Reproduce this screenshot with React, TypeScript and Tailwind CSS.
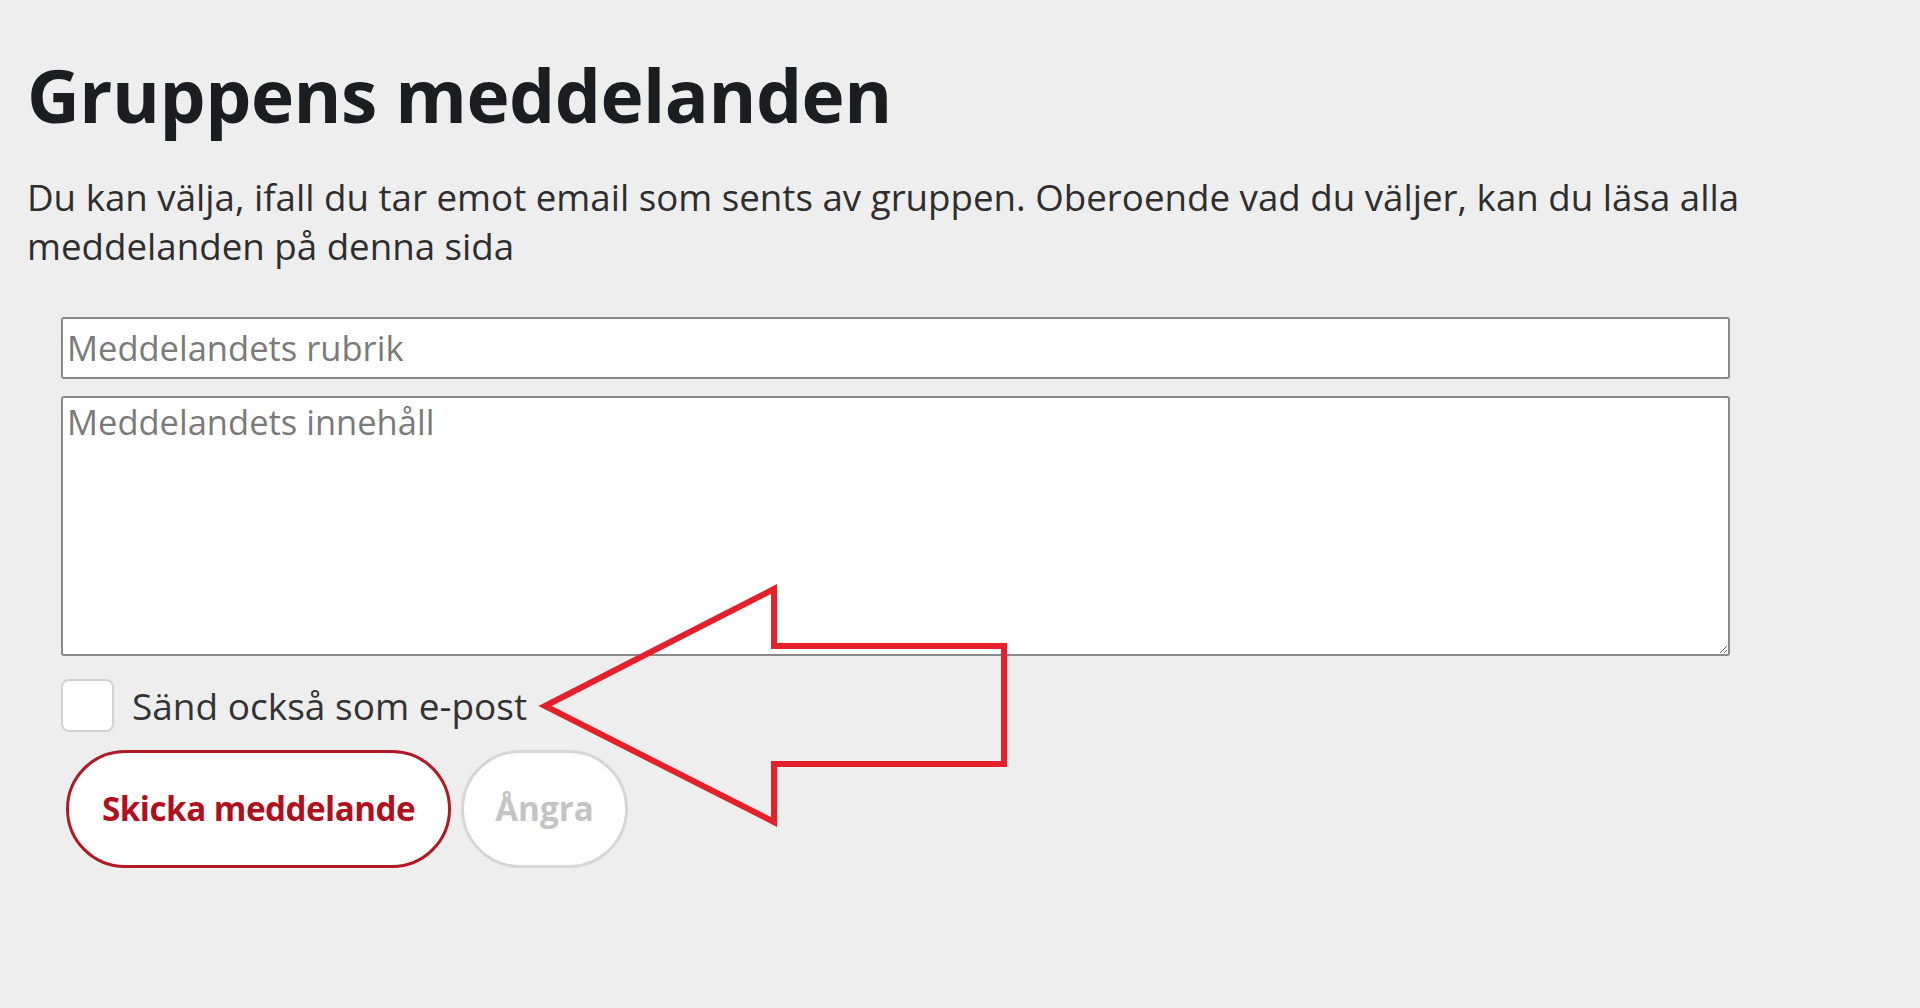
import { useState } from "react";

// big arrow drawn over the form, pointing at the e-post checkbox
const ArrowOverlay = () => (
  <svg
    className="pointer-events-none absolute left-0 top-0"
    width={1920}
    height={1008}
    viewBox="0 0 1920 1008"
  >
    <polygon
      points="545,706 774,589 774,646 1004,646 1004,764 774,764 774,822"
      fill="none"
      stroke="#e4202b"
      strokeWidth={6}
      strokeLinejoin="miter"
    />
  </svg>
);

export default function App() {
  const [title, setTitle] = useState("");
  const [body, setBody] = useState("");
  const [sendMail, setSendMail] = useState(false);

  return (
    <div className="relative min-h-[1008px] w-full bg-[#eeeeee] font-['Open_Sans',sans-serif]">
      <div className="px-[27px] pt-[51px]">
        <h1 className="text-[73px] font-bold leading-[1.2] tracking-[-0.5px] text-[#1c1d21]">
          Gruppens meddelanden
        </h1>
        <p className="mt-[34px] max-w-[1760px] text-[36.7px] leading-[49px] text-[#2e2e2e]">
          Du kan välja, ifall du tar emot email som sents av gruppen. Oberoende vad du väljer, kan du läsa alla
          <br />
          meddelanden på denna sida
        </p>

        {/* form */}
        <div className="mt-[46px] ml-[34px] w-[1669px]">
          <input
            value={title}
            onChange={(e) => setTitle(e.target.value)}
            placeholder="Meddelandets rubrik"
            className="block h-[62px] w-full rounded-[3px] border-2 border-[#8a8a8a] bg-white px-[4px] text-[34.5px] text-[#333] outline-none placeholder:text-[#7a7a7a]"
          />
          <textarea
            value={body}
            onChange={(e) => setBody(e.target.value)}
            placeholder="Meddelandets innehåll"
            className="mt-[17px] block h-[260px] w-full rounded-[3px] border-2 border-[#8a8a8a] bg-white px-[4px] pt-[2px] text-[34.5px] leading-[44px] text-[#333] outline-none placeholder:text-[#7a7a7a]"
          />

          <label className="mt-[22px] flex cursor-pointer items-center gap-[18px]">
            <span
              className={`h-[53px] w-[53px] rounded-[8px] border-2 border-[#d2d2d2] ${
                sendMail ? "bg-[#b3101e]" : "bg-white"
              }`}
            />
            <input
              type="checkbox"
              checked={sendMail}
              onChange={() => setSendMail(!sendMail)}
              className="hidden"
            />
            <span className="text-[37px] text-[#333]">Sänd också som e-post</span>
          </label>

          <div className="mt-[17px] ml-[5px] flex gap-[10px]">
            <button className="h-[118px] rounded-full border-[3px] border-[#b01a25] bg-white px-[33px] text-[33.2px] font-bold tracking-[-0.5px] text-[#b0101e]">
              Skicka meddelande
            </button>
            <button className="h-[118px] rounded-full border-[3px] border-[#d6d6d6] bg-white px-[31px] text-[33.2px] font-bold text-[#c4c4c4]">
              Ångra
            </button>
          </div>
        </div>
      </div>
      <ArrowOverlay />
    </div>
  );
}
